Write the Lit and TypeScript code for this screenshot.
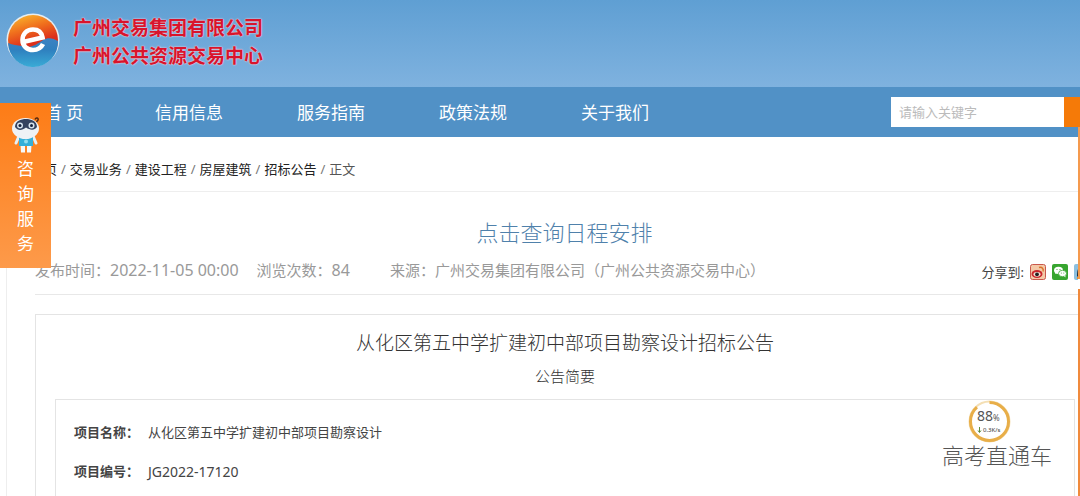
import { LitElement, html, css, svg } from "lit";
import { customElement } from "lit/decorators.js";

const NAV = ["首 页", "信用信息", "服务指南", "政策法规", "关于我们"];
const CRUMBS = ["首页", "交易业务", "建设工程", "房屋建筑", "招标公告"];
const FIELDS = [
  { label: "项目名称：", value: "从化区第五中学扩建初中部项目勘察设计", code: false },
  { label: "项目编号：", value: "JG2022-17120", code: true },
];

const logo = svg`
  <svg class="logo" viewBox="0 0 54 54" aria-hidden="true">
    <defs>
      <linearGradient id="warm" x1="0.2" y1="0" x2="0.5" y2="1">
        <stop offset="0" stop-color="#f9b62c" /><stop offset="0.3" stop-color="#f0701d" /><stop offset="0.6" stop-color="#dc2f1c" />
      </linearGradient>
      <linearGradient id="cool" x1="0" y1="0" x2="0" y2="1">
        <stop offset="0" stop-color="#3c82c2" /><stop offset="0.4" stop-color="#2f80bf" /><stop offset="1" stop-color="#3aabd6" />
      </linearGradient>
    </defs>
    <circle cx="27" cy="27" r="26.5" fill="#e6edf0" />
    <circle cx="27" cy="27" r="25" fill="url(#warm)" />
    <path d="M2 30C7 32 11 32 16 33C25 36 31 31 37 27C42 24 47 25 52 28A25 25 0 0 1 2 30Z" fill="url(#cool)" />
    <path d="M17 29L36.500 24.500C35.500 18.500 31.500 16.500 27 16.500C20.500 16.500 16.500 21 16.500 27C16.500 33 21 37 27 37C31.500 37 35 35 37 31" fill="none" stroke="#fff" stroke-width="4.600" />
  </svg>`;

const mascot = svg`
  <svg class="mascot" viewBox="0 0 30 38" aria-hidden="true">
    <path d="M9.500 29h4.500v7.500h-4zM16 29h4.500l-.5 7.500h-4z" fill="#f5f9fb" />
    <path d="M8 20L5 27M22 20L25 27" stroke="#e5f0f6" stroke-width="3" stroke-linecap="round" />
    <path d="M8 20h14v10h-14z" fill="#35afd8" />
    <circle cx="15" cy="25.500" r="2" fill="#91dcee" />
    <ellipse cx="14.500" cy="12.500" rx="13.500" ry="10.500" fill="#eef2f6" />
    <path d="M4 11C4 5 10 3 15 3C20 3 26 5 26 11C23 15 19 14 15 11.500C11 14.500 7 15 4 11Z" fill="#34425f" />
    <circle cx="9" cy="9.500" r="3" fill="#d6e2ed" /><circle cx="20.500" cy="9.500" r="3" fill="#d6e2ed" />
    <circle cx="9" cy="9.500" r="1.500" fill="#14203c" /><circle cx="20.500" cy="9.500" r="1.500" fill="#14203c" />
    <path d="M24 3.500C25 1 28 2 27 4L25.500 6" fill="none" stroke="#5a2b10" stroke-width="1.500" />
  </svg>`;

const weibo = svg`
  <svg viewBox="0 0 16 16" aria-hidden="true">
    <rect x=".5" y=".5" width="15" height="15" rx="2" fill="#f4c9a8" stroke="#c9584c" />
    <ellipse cx="7" cy="10" rx="5.500" ry="4" fill="#c9252b" />
    <ellipse cx="7" cy="10.300" rx="3.500" ry="2.400" fill="#f5dcd4" />
    <circle cx="7" cy="10.300" r="1.900" fill="#222" />
    <path d="M9 3.500C12 2.500 14 5 13 7.500" fill="none" stroke="#d9742b" stroke-width="1.400" />
  </svg>`;

const wechat = svg`
  <svg viewBox="0 0 16 16" aria-hidden="true">
    <rect width="16" height="16" rx="2" fill="#37a52f" />
    <path d="M3 10l1-2.500h3L5 9z" fill="#fff" />
    <ellipse cx="6.500" cy="6.300" rx="4.500" ry="3.600" fill="#fff" />
    <ellipse cx="10.500" cy="9.500" rx="4" ry="3.200" fill="#fff" stroke="#37a52f" stroke-width=".8" />
    <path d="M12 12l1.500 1.500-.3-2.500z" fill="#fff" />
    <circle cx="5" cy="5.500" r=".6" fill="#37a52f" /><circle cx="8" cy="5.500" r=".6" fill="#37a52f" />
    <circle cx="9.300" cy="9" r=".5" fill="#37a52f" /><circle cx="11.800" cy="9" r=".5" fill="#37a52f" />
  </svg>`;

const qq = svg`
  <svg viewBox="0 0 16 16" aria-hidden="true">
    <rect width="16" height="16" rx="2" fill="#8cc0e0" />
    <path d="M3 12C3 7 4 2 8 2s5 5 5 10l-2 2H5z" fill="#26313d" />
    <ellipse cx="8" cy="10" rx="3" ry="3.500" fill="#fff" />
    <path d="M3 14h4M9 14h4" stroke="#e8912b" stroke-width="2" />
  </svg>`;

@customElement("app-root")
export class AppRoot extends LitElement {
  static styles = css`
    :host {
      display: block;
      position: relative;
      min-height: 100vh;
      overflow: hidden;
      box-sizing: border-box;
      background: #fff;
      color: #444;
      font: 13px/20px "Noto Sans", "Noto Sans CJK SC", sans-serif;
    }
    * { box-sizing: border-box; }
    a { color: inherit; text-decoration: none; }
    h1, h2, p, dl, dd, ul, ol { margin: 0; padding: 0; font-weight: 400; }
    ul, ol { list-style: none; }
    .banner {
      display: flex;
      align-items: center;
      gap: 13px;
      height: 87px;
      padding: 0 6px 8px;
      background: linear-gradient(#5f9fd3, #7fb2df);
    }
    .logo { width: 54px; height: 54px; }
    .brand {
      padding-top: 4px;
      color: #d8142c;
      font-size: 19px;
      line-height: 28px;
      font-weight: 700;
      text-shadow: 0 0 2px #f5d5e2, 0 0 1px #f5d5e2;
    }
    .nav {
      display: flex;
      align-items: center;
      justify-content: space-between;
      height: 50px;
      background: #5191c6;
    }
    .links { display: flex; padding-top: 2px; color: #fff; font-size: 17px; line-height: 24px; }
    .links li { width: 142px; text-align: center; }
    .links li:first-child { width: 118px; padding-left: 10px; }
    .search { display: flex; height: 30px; }
    .search input {
      width: 173px;
      padding: 0 8px;
      border: 0;
      border-radius: 0;
      background: #fff;
      font: inherit;
    }
    .search input::placeholder { color: #bbb; opacity: 1; }
    .search button { width: 16px; border: 0; padding: 0; background: #f57a08; }
    .page { margin-left: 6px; border-left: 1px solid #eee; padding-left: 28px; }
    .crumbs {
      display: flex;
      gap: 4px;
      margin-left: -4px;
      padding: 22px 0 12px;
      border-bottom: 1px solid #eee;
      color: #222;
    }
    .crumbs li { display: flex; gap: 4px; }
    .crumbs i { color: #777; font-style: normal; }
    .crumbs .current { color: #555; }
    .schedule {
      padding: 24px 0 6px 14px;
      text-align: center;
      color: #4f81ab;
      font-size: 22px;
      line-height: 32px;
      font-weight: 300;
    }
    .meta {
      display: flex;
      justify-content: space-between;
      align-items: center;
      height: 41px;
      padding-bottom: 8px;
      border-bottom: 1px solid #e8e8e8;
      color: #999;
      font-size: 15px;
    }
    .facts { display: flex; align-items: baseline; }
    .facts b { font-size: 16px; font-weight: 400; }
    .views { margin: 0 40px 0 18px; }
    .share {
      display: flex;
      align-items: center;
      gap: 6px;
      margin-right: -10px;
      padding-top: 4px;
      color: #444;
      font-size: 13px;
    }
    .share svg { display: block; width: 16px; height: 16px; }
    .notice {
      margin-top: 19px;
      border: 1px solid #e4e4e4;
      border-width: 1px 0 0 1px;
      padding: 14px 5px 0 19px;
      text-align: center;
    }
    .notice h2 { font-size: 19px; line-height: 28px; font-weight: 300; color: #333; }
    .notice p { padding: 9px 0 13px; font-size: 15px; font-weight: 300; color: #333; }
    .fields {
      min-height: 110px;
      padding: 13px 18px;
      border: 1px solid #e4e4e4;
      border-bottom: 0;
      text-align: left;
    }
    .row { display: flex; gap: 9px; line-height: 39px; }
    .row dt { width: 65px; font-weight: 700; white-space: nowrap; }
    .row .code { font-size: 14px; }
    .consult {
      position: absolute;
      left: 0;
      top: 103px;
      display: flex;
      flex-direction: column;
      align-items: center;
      width: 51px;
      height: 165px;
      padding-top: 13px;
      background: linear-gradient(#fd7c16, #fd9a4a);
      color: #fff;
      font-size: 17px;
      line-height: 25px;
    }
    .mascot { width: 30px; height: 38px; margin-bottom: 2px; }
    .consult span { width: 17px; }
    .edge {
      position: absolute;
      right: 0;
      top: 127px;
      bottom: 0;
      width: 2px;
      background: linear-gradient(#f59a4e 152px, #fff 152px, #fff 162px, #f08a3c 162px);
    }
    .speed {
      position: absolute;
      right: 69px;
      top: 400px;
      width: 43px;
      height: 43px;
    }
    .speed svg { display: block; width: 43px; height: 43px; }
    .watermark {
      position: absolute;
      right: 28px;
      top: 439px;
      color: #555;
      font-size: 22px;
      line-height: 32px;
      font-weight: 300;
    }
  `;

  render() {
    return html`
      <header>
        <div class="banner">
          ${logo}
          <div class="brand"><div>广州交易集团有限公司</div><div>广州公共资源交易中心</div></div>
        </div>
        <nav class="nav">
          <ul class="links">${NAV.map((n) => html`<li><a href="#">${n}</a></li>`)}</ul>
          <form class="search">
            <input type="text" aria-label="请输入关键字" placeholder="请输入关键字" />
            <button type="button" aria-label="搜索"></button>
          </form>
        </nav>
      </header>
      <main class="page">
        <ol class="crumbs">
          ${CRUMBS.map((c) => html`<li><a href="#">${c}</a><i>/</i></li>`)}
          <li class="current">正文</li>
        </ol>
        <h1 class="schedule"><a href="#">点击查询日程安排</a></h1>
        <div class="meta">
          <div class="facts">
            <span>发布时间：<b>2022-11-05 00:00</b></span>
            <span class="views">浏览次数：<b>84</b></span>
            <span>来源：广州交易集团有限公司（广州公共资源交易中心）</span>
          </div>
          <div class="share">
            <span>分享到:</span>
            <a href="#" aria-label="微博">${weibo}</a>
            <a href="#" aria-label="微信">${wechat}</a>
            <a href="#" aria-label="QQ">${qq}</a>
          </div>
        </div>
        <section class="notice">
          <h2>从化区第五中学扩建初中部项目勘察设计招标公告</h2>
          <p>公告简要</p>
          <dl class="fields">
            ${FIELDS.map((f) => html`<div class="row"><dt>${f.label}</dt><dd class=${f.code ? "code" : "name"}>${f.value}</dd></div>`)}
          </dl>
        </section>
      </main>
      <a class="consult" href="#">${mascot}${[..."咨询服务"].map((c) => html`<span>${c}</span>`)}</a>
      <div class="edge"></div>
      <div class="speed">
        <svg viewBox="0 0 43 43">
          <circle cx="21.500" cy="21.500" r="20" fill="#fff" stroke="#f4dfb4" stroke-width="2" />
          <circle cx="21.500" cy="21.500" r="19" fill="none" stroke="#e8ae48" stroke-width="3" stroke-dasharray="105 15" transform="rotate(-90 21.500 21.500)" />
          <text x="9" y="21" font-size="14" fill="#555">88<tspan font-size="8">%</tspan></text>
          <path d="M11.500 27v5M10 30.500l1.500 2 1.500-2" stroke="#5b8a3a" fill="none" />
          <text x="15" y="32" font-size="6" fill="#333">0.3K/s</text>
        </svg>
      </div>
      <div class="watermark">高考直通车</div>
    `;
  }
}
